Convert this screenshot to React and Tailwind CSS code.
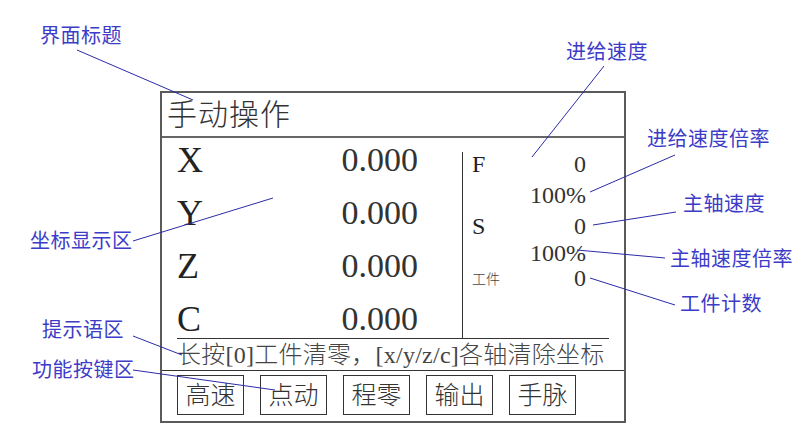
import React from "react";

const serif = "font-['Liberation_Serif','Noto_Sans_CJK_SC',serif]";

const axes = ["X", "Y", "Z", "C"];
const keys = ["高速", "点动", "程零", "输出", "手脉"];

const notes = [
  { text: "界面标题", x: 40, y: 25 },
  { text: "进给速度", x: 566, y: 41 },
  { text: "进给速度倍率", x: 647, y: 128 },
  { text: "主轴速度", x: 683, y: 193 },
  { text: "主轴速度倍率", x: 670, y: 248 },
  { text: "工件计数", x: 680, y: 293 },
  { text: "坐标显示区", x: 30, y: 230 },
  { text: "提示语区", x: 42, y: 319 },
  { text: "功能按键区", x: 32, y: 359 },
];

const leaders = [
  [77, 50, 193, 100],
  [604, 66, 532, 157],
  [675, 155, 590, 192],
  [676, 212, 593, 225],
  [665, 258, 577, 250],
  [675, 305, 590, 278],
  [133, 241, 273, 198],
  [133, 336, 182, 355],
  [133, 370, 275, 390],
];

function Panel() {
  return (
    <div className={`ml-[160px] w-[466px] h-[332px] border-2 border-[#5a5a5a] flex flex-col text-[#333] ${serif}`}>
      {/* title */}
      <div className="h-[45px] border-b-2 border-[#666] flex items-center pl-[5px]">
        <span className="text-[30px] leading-none tracking-[1px] font-light">手动操作</span>
      </div>

      {/* axes + feed/spindle */}
      <div className="flex mx-[15px] h-[201px] border-b border-[#333]">
        <div className="w-[285px] flex flex-col gap-[13px] pt-[2px]">
          {axes.map((a) => (
            <div key={a} className="h-[40px] w-[241px] flex items-center justify-between">
              <span className="text-[36px] leading-[40px] text-[#222]">{a}</span>
              <span className="text-[34px] leading-[40px]">0.000</span>
            </div>
          ))}
        </div>
        <div className="flex-1 mt-[14px] border-l border-[#333] pl-[9px] pr-[23px] flex flex-col text-[24px]">
          <div className="h-[24px] flex items-center justify-between leading-none">
            <span className="text-[#222]">F</span>
            <span>0</span>
          </div>
          <div className="h-[38px] flex items-center justify-end leading-none">100%</div>
          <div className="h-[23px] flex items-center justify-between leading-none">
            <span className="text-[#222]">S</span>
            <span>0</span>
          </div>
          <div className="h-[32px] flex items-center justify-end leading-none">100%</div>
          <div className="h-[18px] flex items-center justify-between leading-none">
            <span className="text-[14px] font-['Noto_Sans_CJK_SC',sans-serif] font-light text-[#444]">工件</span>
            <span>0</span>
          </div>
        </div>
      </div>

      {/* hint */}
      <div className="h-[31px] flex items-center px-[15px]">
        <span className="text-[24px] leading-none tracking-[0.25px] font-light text-[#444] whitespace-nowrap">
          长按[0]工件清零，[x/y/z/c]各轴清除坐标
        </span>
      </div>

      {/* function keys */}
      <div className="flex-1 border-t border-[#333] flex gap-[16px] px-[15px] pt-[4px]">
        {keys.map((k) => (
          <div
            key={k}
            className="w-[67px] h-[40px] border border-[#333] flex items-center justify-center text-[25px] leading-none font-light text-[#333]"
          >
            {k}
          </div>
        ))}
      </div>
    </div>
  );
}

export default function App() {
  return (
    <div className="relative w-[801px] h-[437px] bg-white overflow-hidden">
      <div className="pt-[91px]">
        <Panel />
      </div>

      {/* annotation leaders */}
      <svg className="absolute inset-0 pointer-events-none" width="801" height="437">
        {leaders.map(([x1, y1, x2, y2], i) => (
          <line key={i} x1={x1} y1={y1} x2={x2} y2={y2} stroke="#2b2ba8" strokeWidth="1" />
        ))}
      </svg>

      {notes.map((n) => (
        <span
          key={n.text}
          className="absolute text-[20px] leading-[20px] tracking-[0.5px] text-[#3c3cc8] whitespace-nowrap font-['Noto_Sans_CJK_SC',sans-serif]"
          style={{ left: n.x, top: n.y }}
        >
          {n.text}
        </span>
      ))}
    </div>
  );
}
